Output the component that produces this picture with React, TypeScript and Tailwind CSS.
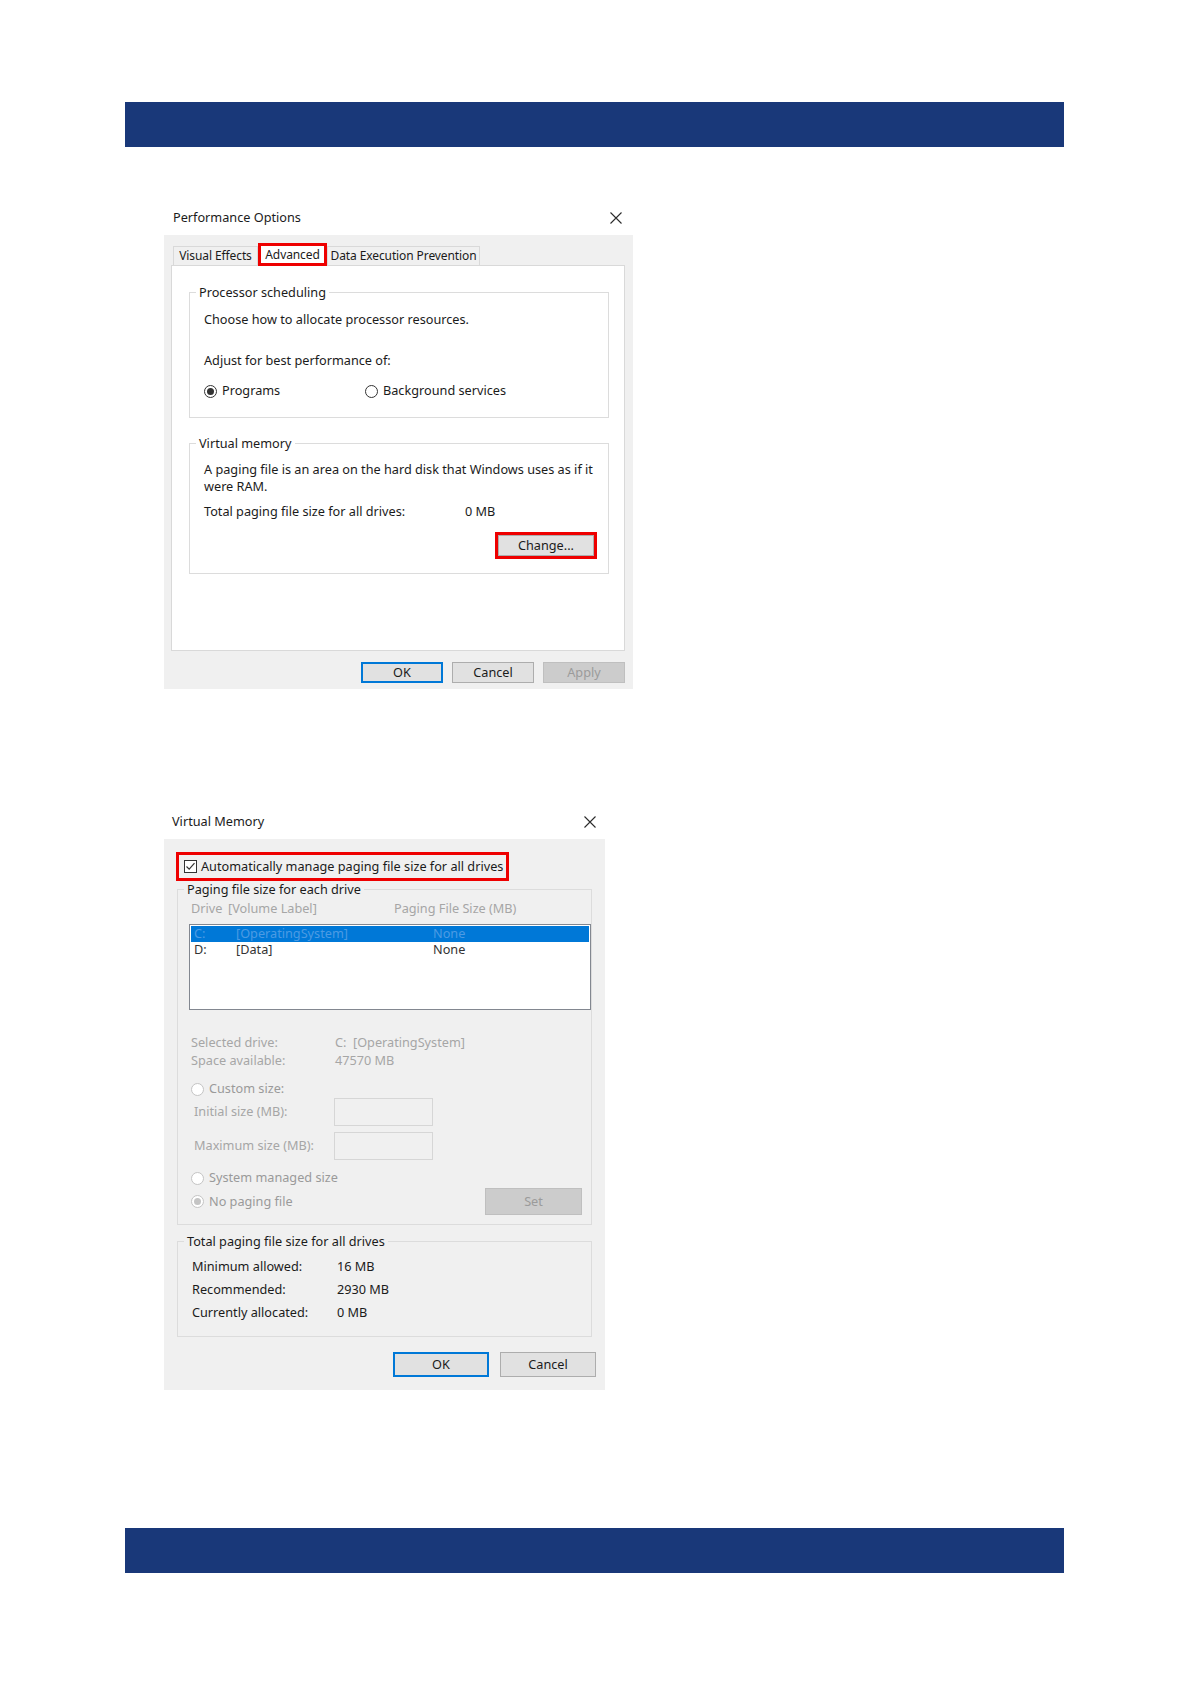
const dim = 'text-[#a6a6a6]';

function CloseIcon() {
  return (
    <svg width="12" height="12" viewBox="0 0 12 12" className="block">
      <path d="M0.5 0.5 L11.5 11.5 M11.5 0.5 L0.5 11.5" stroke="#2b2b2b" strokeWidth="1.1" fill="none" />
    </svg>
  );
}

function Radio({ checked = false, disabled = false }: { checked?: boolean; disabled?: boolean }) {
  return (
    <span
      className={`flex h-[13px] w-[13px] shrink-0 items-center justify-center rounded-full border bg-white ${
        disabled ? 'border-[#c4c4c4]' : 'border-[#333333]'
      }`}
    >
      {checked && (
        <span className={`h-[7px] w-[7px] rounded-full ${disabled ? 'bg-[#c4c4c4]' : 'bg-[#333333]'}`} />
      )}
    </span>
  );
}

function Checkbox() {
  return (
    <span className="flex h-[13px] w-[13px] shrink-0 items-center justify-center border border-[#333333] bg-white">
      <svg width="11" height="11" viewBox="0 0 11 11">
        <path d="M1.5 5.5 L4.2 8.2 L9.5 2.2" stroke="#333333" strokeWidth="1.2" fill="none" />
      </svg>
    </span>
  );
}

function Button({ label, primary = false, disabled = false, className = '' }: { label: string; primary?: boolean; disabled?: boolean; className?: string }) {
  const look = disabled
    ? 'bg-[#cccccc] border-[#bfbfbf] text-[#9b9b9b]'
    : primary
    ? 'bg-[#e1e1e1] border-[#0078d7] border-2'
    : 'bg-[#e1e1e1] border-[#adadad]';
  return (
    <div className={`flex items-center justify-center border ${look} ${className}`}>{label}</div>
  );
}

function PerformanceOptions() {
  return (
    <div className="ml-[164px] mt-[53px] w-[469px]">
      <div className="flex h-[35px] items-center justify-between pl-[9px] pr-[11px]">
        <span>Performance Options</span>
        <CloseIcon />
      </div>
      <div className="bg-[#f0f0f0] pb-[6px] pt-[7px]">
        {/* tabs */}
        <div className="ml-[9px] flex h-[23px] items-end whitespace-nowrap text-[12px] tracking-[-0.1px]">
          <div className="flex h-[19px] w-[85px] items-center justify-center border border-b-0 border-[#d9d9d9] bg-[#f0f0f0]">
            Visual Effects
          </div>
          <div className="relative z-10 -mb-[1px] flex h-[23px] w-[69px] items-center justify-center border-[3px] border-[#ee0000] bg-white">
            Advanced
          </div>
          <div className="flex h-[19px] w-[153px] items-center justify-center border border-b-0 border-[#d9d9d9] bg-[#f0f0f0]">
            Data Execution Prevention
          </div>
        </div>
        <div className="ml-[7px] mr-[8px] h-[386px] border border-[#d9d9d9] bg-white pl-[17px] pr-[15px] pt-[18px]">
          <fieldset className="border border-[#dcdcdc] pb-[18px] pl-[14px]">
            <legend className="ml-[-8px] px-[3px] leading-[16px]">Processor scheduling</legend>
            <div className="mt-[11px] leading-[16px]">Choose how to allocate processor resources.</div>
            <div className="mt-[25px] leading-[16px]">Adjust for best performance of:</div>
            <div className="mt-[15px] flex h-[16px] items-center">
              <div className="flex w-[161px] items-center gap-[5px]">
                <Radio checked />
                <span>Programs</span>
              </div>
              <div className="flex items-center gap-[5px]">
                <Radio />
                <span>Background services</span>
              </div>
            </div>
          </fieldset>
          <fieldset className="mt-[17px] border border-[#dcdcdc] pb-[14px] pl-[14px] pr-[11px]">
            <legend className="ml-[-8px] px-[3px] leading-[16px]">Virtual memory</legend>
            <div className="mt-[10px] leading-[17px]">
              A paging file is an area on the hard disk that Windows uses as if it
              <br />
              were RAM.
            </div>
            <div className="mt-[8px] flex leading-[16px]">
              <span className="w-[261px]">Total paging file size for all drives:</span>
              <span>0 MB</span>
            </div>
            <div className="mt-[13px] flex justify-end">
              <div className="h-[27px] w-[102px] border-[3px] border-[#ee0000]">
                <Button label="Change..." className="h-full w-full" />
              </div>
            </div>
          </fieldset>
        </div>
        <div className="mt-[11px] flex justify-end gap-[9px] pr-[8px]">
          <Button label="OK" primary className="h-[21px] w-[82px]" />
          <Button label="Cancel" className="h-[21px] w-[82px]" />
          <Button label="Apply" disabled className="h-[21px] w-[82px]" />
        </div>
      </div>
    </div>
  );
}

function VirtualMemory() {
  return (
    <div className="ml-[164px] mt-[115px] w-[441px]">
      <div className="flex h-[35px] items-center justify-between pl-[8px] pr-[9px]">
        <span>Virtual Memory</span>
        <CloseIcon />
      </div>
      <div className="bg-[#f0f0f0] pb-[13px] pt-[13px]">
        <div className="ml-[12px] flex h-[29px] w-[333px] items-center gap-[4px] border-[3px] border-[#ee0000] pl-[5px]">
          <Checkbox />
          <span>Automatically manage paging file size for all drives</span>
        </div>
        <fieldset className="mx-[13px] border border-[#dcdcdc] pb-[9px] pl-[11px] pr-0">
          <legend className="ml-[-5px] px-[3px] leading-[16px]">Paging file size for each drive</legend>
          <div className={`mt-[4px] flex h-[16px] items-center pl-[2px] ${dim}`}>
            <span className="w-[37px]">Drive</span>
            <span className="w-[166px]">[Volume Label]</span>
            <span>Paging File Size (MB)</span>
          </div>
          <div className="mt-[7px] h-[86px] border border-[#828790] bg-white p-[1px]">
            <div className="flex h-[16px] items-center bg-[#0078d7] pl-[3px] text-[#4c9be3]">
              <span className="w-[42px]">C:</span>
              <span className="w-[197px]">[OperatingSystem]</span>
              <span>None</span>
            </div>
            <div className="flex h-[16px] items-center pl-[3px] text-[#333333]">
              <span className="w-[42px]">D:</span>
              <span className="w-[197px]">[Data]</span>
              <span>None</span>
            </div>
          </div>
          <div className={`mt-[23px] pl-[2px] leading-[18px] ${dim}`}>
            <div className="flex">
              <span className="w-[144px]">Selected drive:</span>
              <span>C:&nbsp;&nbsp;[OperatingSystem]</span>
            </div>
            <div className="flex">
              <span className="w-[144px]">Space available:</span>
              <span>47570 MB</span>
            </div>
          </div>
          <div className="mt-[11px] flex h-[18px] items-center gap-[5px] pl-[2px] text-[#9a9a9a]">
            <Radio disabled />
            <span>Custom size:</span>
          </div>
          <div className={`flex h-[28px] items-center pl-[5px] ${dim}`}>
            <span className="w-[140px]">Initial size (MB):</span>
            <div className="h-[28px] w-[99px] border border-[#d6d6d6] bg-[#f0f0f0]" />
          </div>
          <div className={`mt-[6px] flex h-[28px] items-center pl-[5px] ${dim}`}>
            <span className="w-[140px]">Maximum size (MB):</span>
            <div className="h-[28px] w-[99px] border border-[#d6d6d6] bg-[#f0f0f0]" />
          </div>
          <div className="mt-[9px] flex h-[18px] items-center gap-[5px] pl-[2px] text-[#9a9a9a]">
            <Radio disabled />
            <span>System managed size</span>
          </div>
          <div className="mt-[1px] flex h-[27px] items-center pl-[2px] pr-[9px]">
            <div className="flex items-center gap-[5px] text-[#9a9a9a]">
              <Radio checked disabled />
              <span>No paging file</span>
            </div>
            <Button label="Set" disabled className="ml-auto h-[27px] w-[97px]" />
          </div>
        </fieldset>
        <fieldset className="mx-[13px] mt-[8px] border border-[#dcdcdc] pb-[12px] pl-[14px]">
          <legend className="ml-[-8px] px-[3px] leading-[16px]">Total paging file size for all drives</legend>
          <div className="mt-[6px]">
            <div className="flex h-[23px] items-center">
              <span className="w-[145px]">Minimum allowed:</span>
              <span>16 MB</span>
            </div>
            <div className="flex h-[23px] items-center">
              <span className="w-[145px]">Recommended:</span>
              <span>2930 MB</span>
            </div>
            <div className="flex h-[23px] items-center">
              <span className="w-[145px]">Currently allocated:</span>
              <span>0 MB</span>
            </div>
          </div>
        </fieldset>
        <div className="mt-[15px] flex justify-end gap-[11px] pr-[9px]">
          <Button label="OK" primary className="h-[25px] w-[96px]" />
          <Button label="Cancel" className="h-[25px] w-[96px]" />
        </div>
      </div>
    </div>
  );
}

export default function App() {
  return (
    <div className="min-h-[1684px] w-[1191px] bg-white pt-[102px] font-['Noto_Sans',sans-serif] text-[12.7px] text-[#1b1b1b]">
      <div className="ml-[125px] h-[45px] w-[939px] bg-[#193879]" />
      <PerformanceOptions />
      <VirtualMemory />
      <div className="ml-[125px] mt-[138px] h-[45px] w-[939px] bg-[#193879]" />
    </div>
  );
}
